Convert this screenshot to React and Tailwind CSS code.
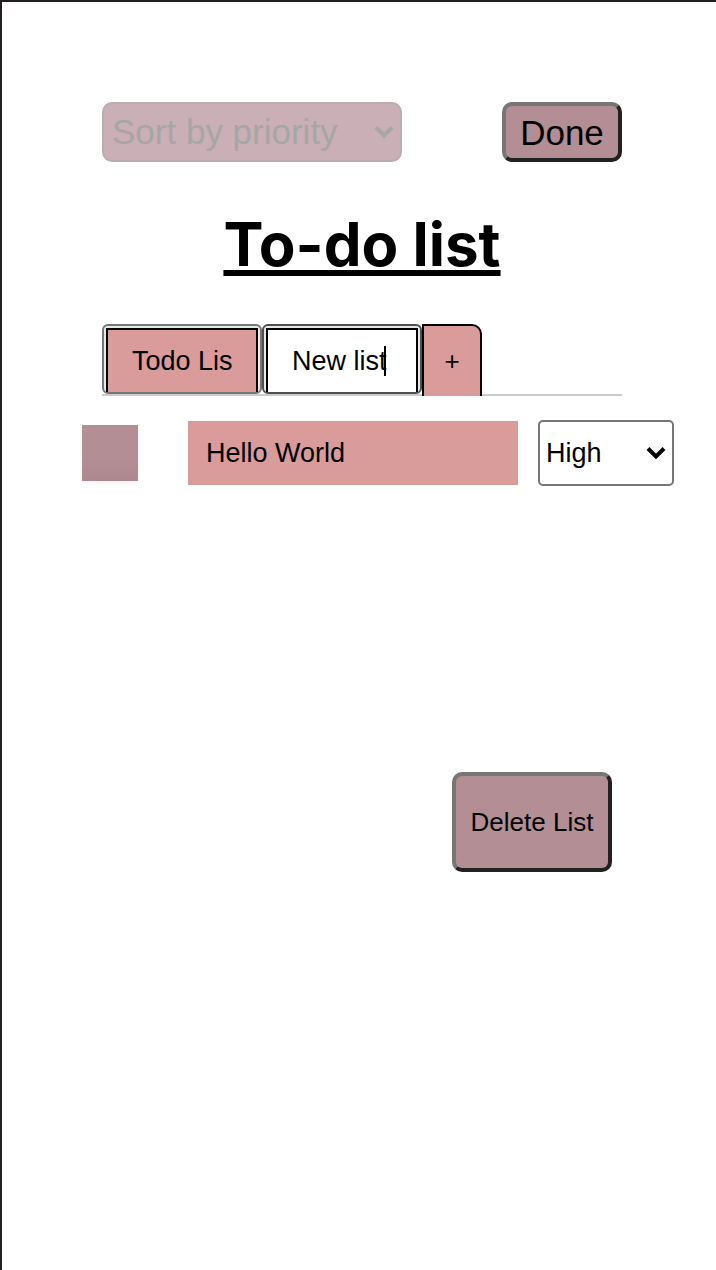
import { useState } from "react";

function Chevron({ className }) {
  return (
    <svg
      viewBox="0 0 20 14"
      width="20"
      height="14"
      fill="none"
      stroke="currentColor"
      strokeWidth="4"
      aria-hidden="true"
      className={`pointer-events-none absolute top-1/2 -translate-y-1/2 ${className}`}
    >
      <path d="M2 2.5 L10 10.5 L18 2.5" />
    </svg>
  );
}

function ListTab({ label, name, onChange, active }) {
  return (
    <div
      className={`relative w-40 rounded-md border-2 bg-[#e9e9e6] px-0.5 pt-0.5 ${
        active ? "border-[#4f4f4f]" : "border-[#767676]"
      }`}
    >
      <input
        type="text"
        aria-label={label}
        value={name}
        onChange={onChange}
        className={`block h-16 w-full rounded-none border-2 border-b-0 border-black px-6 text-[27px] caret-transparent outline-none ${
          active ? "bg-white" : "bg-[#da9b9b]"
        }`}
      />
      {active && (
        <span aria-hidden="true" className="absolute top-5 left-[120px] h-[30px] w-0.5 bg-black" />
      )}
    </div>
  );
}

export default function App() {
  const [first, setFirst] = useState("Todo List");
  const [second, setSecond] = useState("New list");
  const [task, setTask] = useState("Hello World");
  const [done, setDone] = useState(false);

  return (
    <main className="min-h-screen border-t-2 border-l-2 border-[#231f20] bg-white pt-[100px] font-['Liberation_Sans',Arial,sans-serif] text-black">
      <div className="pr-[94px] pl-[100px]">
        <header className="flex items-center justify-between">
          <div className="relative h-[60px] w-[300px] text-[#a6a6a6]">
            <select
              disabled
              aria-label="Sort tasks"
              className="h-full w-full appearance-none rounded-[10px] border-2 border-[#baacaf] bg-[#caafb6] pl-2 text-[35px] opacity-100"
            >
              <option>Sort by priority</option>
            </select>
            <Chevron className="right-2" />
          </div>
          <button
            type="button"
            className="h-[60px] w-[120px] rounded-[10px] border-4 border-t-[#767676] border-r-[#212121] border-b-[#212121] border-l-[#767676] bg-[#b38e95] text-[35px] leading-none"
          >
            Done
          </button>
        </header>

        <h1 className="mt-10 text-center font-[Inter,sans-serif] text-[60px] leading-[84px] font-bold underline decoration-[6px] underline-offset-[4px] [text-decoration-skip-ink:none]">
          To-do list
        </h1>

        <nav aria-label="Lists" className="mt-[38px] flex items-start border-b-2 border-[#cbcbcb]">
          <ListTab label="First list" name={first} onChange={(e) => setFirst(e.target.value)} />
          <ListTab label="Second list" name={second} onChange={(e) => setSecond(e.target.value)} active />
          <button
            type="button"
            aria-label="Add list"
            className="-mb-0.5 h-[72px] w-[60px] rounded-tr-[10px] border-2 border-b-0 border-black bg-[#da9b9b] text-[26px]"
          >
            +
          </button>
        </nav>
      </div>

      <div className="mt-6 flex items-center pr-[42px] pl-20">
        <input
          type="checkbox"
          aria-label="Task done"
          checked={done}
          onChange={(e) => setDone(e.target.checked)}
          className="h-14 w-14 shrink-0 appearance-none bg-linear-to-b from-[#b38e95] from-60% to-[#ad898f] shadow-[0_2px_4px_#0000000d]"
        />
        <input
          type="text"
          aria-label="Task"
          value={task}
          onChange={(e) => setTask(e.target.value)}
          className="ml-[50px] h-16 min-w-0 flex-1 bg-[#da9b9b] px-[18px] text-[27px] outline-none"
        />
        <div className="relative ml-5 h-[66px] w-[136px]">
          <select
            aria-label="Priority"
            defaultValue="High"
            className="h-full w-full appearance-none rounded-[5px] border-2 border-[#767676] bg-white pl-[6px] text-[27px]"
          >
            <option>High</option>
            <option>Medium</option>
            <option>Low</option>
          </select>
          <Chevron className="right-2" />
        </div>
      </div>

      <div className="mt-[286px] flex justify-end pr-[104px]">
        <button
          type="button"
          className="h-[100px] w-40 rounded-[10px] border-4 border-t-[#767676] border-r-[#212121] border-b-[#212121] border-l-[#767676] bg-[#b38e95] text-[26px]"
        >
          Delete List
        </button>
      </div>
    </main>
  );
}
